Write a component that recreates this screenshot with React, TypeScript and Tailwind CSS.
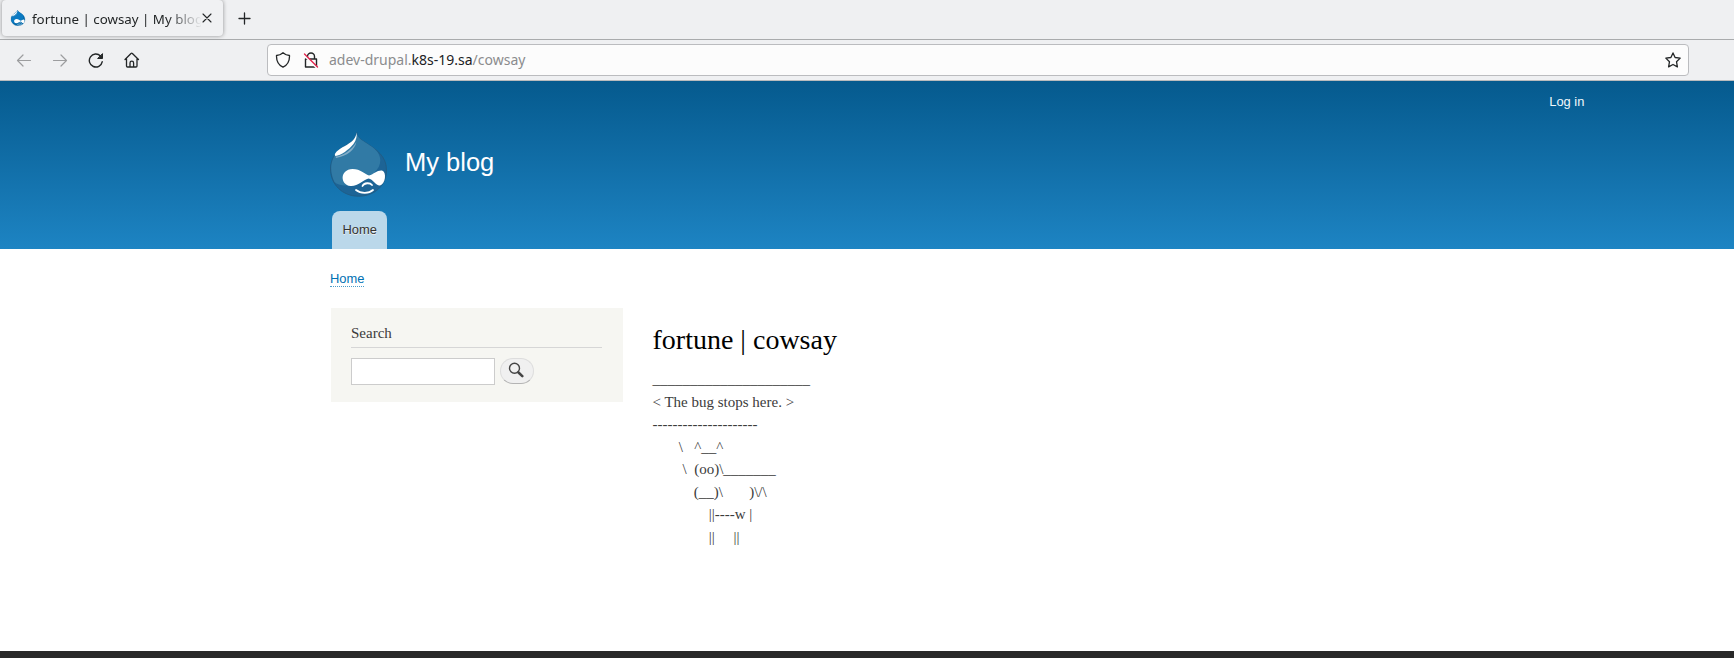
const cow = [
  "_____________________",
  "< The bug stops here. >",
  "---------------------",
  "       \\   ^__^",
  "        \\  (oo)\\_______",
  "           (__)\\       )\\/\\",
  "               ||----w |",
  "               ||     ||",
].join("\n");

function Drop({ className, flat }: { className: string; flat?: boolean }) {
  return (
    <svg className={className} viewBox="0 0 57 65" fill="none">
      <path d="M26.6.5C27.5 6 31.5 8 37 11.5C46 17.5 56.5 24 56.5 38C56.5 54 44 64.2 28.5 64.2C12.5 64.2 .5 52.5 .5 37C.5 26 6.5 19 15 14C21.5 10.2 26 7 26.6 .5Z" fill={flat ? "#0069ac" : "#1d6496"} stroke={flat ? "#075a91" : "#205d86"} strokeWidth="1" />
      <path d="M26.6 .5C27.5 6 31.5 8 37 11.5C44 16 50 20 50.3 28C50.5 38 41 44 32 49C23 54.500 9 55 4.500 50C-1 39 -1 23 15 14C21.5 10 26 7 26.6 .5Z" fill={flat ? "#0b7ac2" : "#317aa5"} />
      <path d="M5.500 24.500C12 24.500 22 18 26.300 10C25 18 17 24 6 26Z" fill="#81acc7" />
      <path d="M26.6 .5C27 4 26.500 8 23.500 12C19 17.500 11 23.500 5.500 24C3 22 8 17.500 15 14C21 10.500 26 7 26.6 .5Z" fill="#fff" />
      <path d="M22.500 37C31 37 34 42 39 43.500C44 42 47 38 52 38.500C57 40 55.500 52 50 53.500C46 54 43 47 38.500 46.500C33 48 28 54.500 20.500 54C10 53 9.500 37.500 22.500 37Z" fill="#fff" />
      <path d="M32.500 54C34 50.500 40 50.500 42 53M26 58C31 62 39 61.500 43 58" stroke="#fff" strokeWidth="1.8" strokeLinecap="round" />
    </svg>
  );
}

const stroke = { fill: "none", stroke: "currentColor", strokeLinecap: "round", strokeLinejoin: "round" } as const;

function TabBar() {
  return (
    <div className="flex h-[39px] items-start">
      <div className="ml-0.5 flex h-9 w-[221px] items-center rounded-[4px] bg-[#f0f1f3] pl-2 shadow-[0_0_4px_rgba(0,0,0,0.4)]">
        <Drop className="size-4 shrink-0" flat />
        <span className="ml-[6px] w-[169px] overflow-hidden mask-r-from-[135px] mask-r-to-[170px] pt-0.5 text-[13.33px] leading-5 whitespace-nowrap">fortune | cowsay | My blog</span>
        <svg className="size-3 shrink-0" viewBox="0 0 12 12" {...stroke} strokeWidth="1.1"><path d="M2 2l8 8M10 2l-8 8" /></svg>
      </div>
      <svg className="mt-3 ml-[15px] size-3.5" viewBox="0 0 14 14" {...stroke} strokeWidth="1.3"><path d="M6.500 1v11M1 6.500h11" /></svg>
    </div>
  );
}

function AddressBar() {
  return (
    <div className="flex h-[42px] items-center border-t border-b border-t-[#a9abad] border-b-[#b9bbbd] pl-4">
      <svg className="size-4 text-[#9c9d9f]" viewBox="0 0 16 16" {...stroke} strokeWidth="1.2"><path d="M14.500 8.500H1.500M7 3L1.500 8.500L7 14" /></svg>
      <svg className="ml-5 size-4 text-[#9c9d9f]" viewBox="0 0 16 16" {...stroke} strokeWidth="1.2"><path d="M1.500 8.500h13M9 3L14.500 8.500L9 14" /></svg>
      <svg className="ml-5 size-4" viewBox="0 0 16 16" {...stroke} strokeWidth="1.4"><path d="M14.200 9.800A6.500 6.500 0 1 1 12.500 4" /><path d="M14.500 2v4.500H10Z" fill="currentColor" strokeWidth="1" /></svg>
      <svg className="ml-5 size-4" viewBox="0 0 16 16" {...stroke} strokeWidth="1.3"><path d="M1 7.500L7 1.500q.7-.6 1.400 0L14.500 7.500M2.500 7v7q0 1 1 1h8.500q1 0 1-1V7M6 15v-4a1.800 1.800 0 0 1 3.600 0v4" /></svg>
      <div className="ml-[127px] flex h-8 w-[1422px] items-center rounded-[4px] border border-[#bbbcbf] bg-[#fcfcfc]">
        <svg className="ml-[7px] size-4" viewBox="0 0 16 16" {...stroke} strokeWidth="1.3"><path d="M8 .8Q11 3.500 14.500 3.500C14.700 9 12.500 13 8 15.200C3.500 13 1.300 9 1.500 3.500Q5 3.500 8 .8Z" /></svg>
        <svg className="ml-3 size-4" viewBox="0 0 16 16" {...stroke} strokeWidth="1.4"><path d="M4.500 7V4.500a3.500 3.500 0 0 1 7 0V7M2.500 7h11v8h-11Z" /><path d="M1.500 3.500L13.500 15.500" stroke="#fcfcfc" strokeWidth="2" /><path d="M1.500 2L14.500 15" stroke="#e2254d" strokeWidth="1.4" /></svg>
        <span className="mb-px ml-2.5 text-[14px] leading-5 text-[#8b8c8e]">adev-drupal.<span className="text-[#202124]">k8s-19.sa</span>/cowsay</span>
        <svg className="mr-[7px] ml-auto size-4" viewBox="0 0 16 16" {...stroke} strokeWidth="1.3"><path d="M8 .9L10.100 5.500L15.200 6.100L11.500 9.700L12.400 14.900L8 12.500L3.600 14.900L4.500 9.700L.8 6.100L5.900 5.500Z" /></svg>
      </div>
    </div>
  );
}

export default function App() {
  return (
    <div className="flex h-[658px] w-[1734px] flex-col overflow-hidden bg-white font-['Liberation_Serif',serif] text-[15px] leading-[22.5px] text-[#3b3b3b]">
      <div className="h-[81px] shrink-0 bg-[#eff0f2] font-['Noto_Sans',sans-serif] text-[#232627]">
        <TabBar />
        <AddressBar />
      </div>
      <header className="flex h-[168px] shrink-0 flex-col bg-linear-to-b from-[#055a8e] to-[#1d84c3] pr-[149.6px] pl-[330px] font-['Liberation_Sans',sans-serif]">
        <a className="mt-[11px] self-end text-[12.9px] leading-5 text-[#f2f8fb]">Log in</a>
        <div className="mt-5 flex items-start">
          <Drop className="h-[65px] w-[57px]" flat={false} />
          <span className="mt-[10px] ml-[18px] text-[25.5px] leading-10 text-[#fffeff]">My blog</span>
        </div>
        <a className="mt-auto ml-0.5 h-[38px] w-[55px] rounded-t-[8px] bg-[#bbd8ea] pl-[10.5px] text-[12.9px] leading-[37px] text-[#333] [text-shadow:0_1px_0_#eee]">Home</a>
      </header>
      <main className="flex grow flex-col px-[330px]">
        <nav className="mt-[22px] flex h-[37px] items-start font-['Liberation_Sans',sans-serif] text-[12.9px] leading-4 text-[#0071b3]">
          <a className="h-4 border-b border-dotted border-[#4b9dcb]">Home</a>
        </nav>
        <div className="flex items-start pl-[0.5px]">
          <aside className="h-[93.5px] w-[292.5px] bg-[#f6f6f2] px-[20.5px] pt-[14px]">
            <h2 className="h-[26px] w-[251px] border-b border-[#d6d6d6]">Search</h2>
            <form className="mt-2.5 flex gap-[5px]">
              <input aria-label="Search" className="h-[27px] w-36 border border-[#ccc] bg-white" />
              <button type="button" className="flex h-[26px] w-[34px] items-center justify-center rounded-full border border-[#ddd] border-b-[#b4b4b4] bg-[#f0f0f0] pr-0.5 pb-0.5">
                <svg className="size-4" viewBox="0 0 16 16" fill="none" stroke="#444"><circle cx="6.500" cy="6.300" r="5" strokeWidth="1.4" /><path d="M10.500 10.500l3.800 3.600" strokeWidth="2.6" strokeLinecap="round" /></svg>
              </button>
            </form>
          </aside>
          <article className="ml-[29.500px]">
            <h1 className="mt-3 text-[28px] leading-10 text-black">fortune | cowsay</h1>
            <pre className="mt-2 font-['Liberation_Serif',serif]">{cow}</pre>
          </article>
        </div>
      </main>
      <footer className="h-[7px] shrink-0 bg-[#292929]" />
    </div>
  );
}
